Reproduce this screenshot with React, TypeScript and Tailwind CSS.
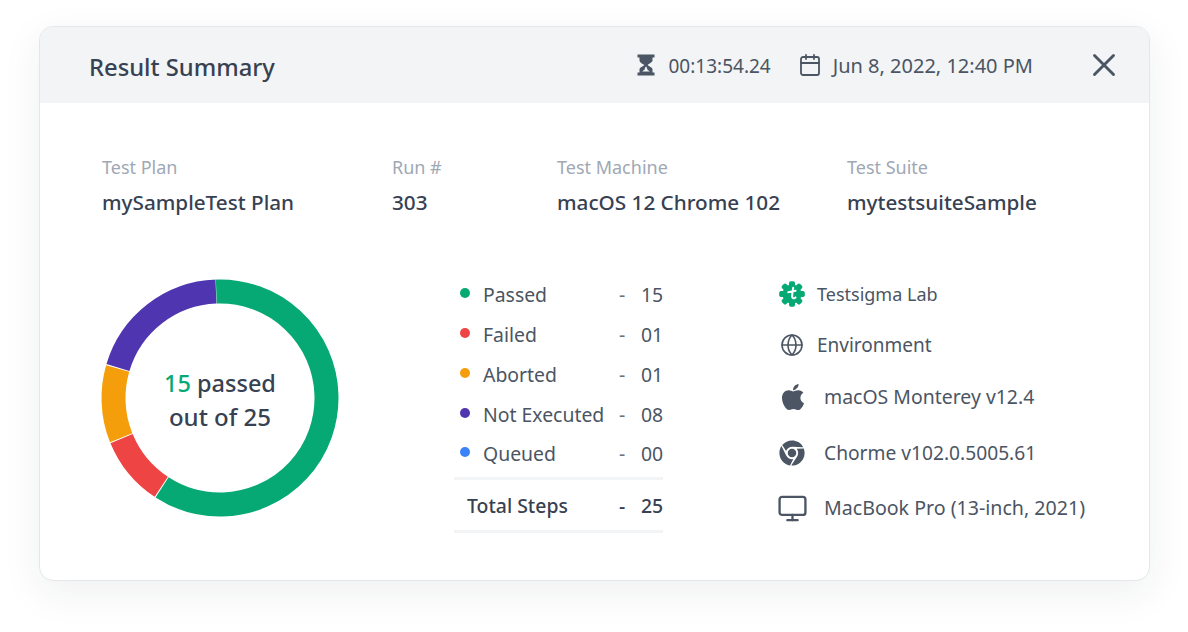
import { Calendar, Globe, Monitor, X } from "lucide-react";
import { FaApple, FaChrome } from "react-icons/fa";

const META = [
  { label: "Test Plan", value: "mySampleTest Plan", width: "w-[290px]" },
  { label: "Run #", value: "303", width: "w-[165px]" },
  { label: "Test Machine", value: "macOS 12 Chrome 102", width: "w-[290px]" },
  { label: "Test Suite", value: "mytestsuiteSample", width: "w-[240px]" },
];

const STATS = [
  { label: "Passed", value: "15", dot: "bg-[#06a973]" },
  { label: "Failed", value: "01", dot: "bg-[#ef4444]" },
  { label: "Aborted", value: "01", dot: "bg-[#f59e0b]" },
  { label: "Not Executed", value: "08", dot: "bg-[#4f35b0]" },
  { label: "Queued", value: "00", dot: "bg-[#3b82f6]" },
];

// pct is the share of the ring, in drawing order from the start angle
const SEGMENTS = [
  { pct: 59.8, color: "#06a973" },
  { pct: 9.6, color: "#ef4444" },
  { pct: 10.7, color: "#f59e0b" },
  { pct: 19.9, color: "#4f35b0" },
];

function Donut() {
  const r = 106.5;
  const c = 2 * Math.PI * r;
  let offset = 0;
  return (
    <div className="relative h-[238px] w-[238px] shrink-0 -translate-x-px translate-y-[2px]">
      <svg viewBox="0 0 238 238" className="h-full w-full rotate-[-92deg]">
        {SEGMENTS.map((s) => {
          const len = (s.pct / 100) * c;
          const el = (
            <circle
              key={s.color}
              cx="119"
              cy="119"
              r={r}
              fill="none"
              stroke={s.color}
              strokeWidth="24"
              strokeDasharray={`${len - 1} ${c - len + 1}`}
              strokeDashoffset={-offset}
            />
          );
          offset += len;
          return el;
        })}
      </svg>
      <div className="absolute inset-0 flex flex-col items-center justify-center pt-[3px] text-[23.5px] leading-[34px] font-medium text-[#374151]">
        <div>
          <span className="text-[#06a973]">15</span> passed
        </div>
        <div className="text-[24px]">out of 25</div>
      </div>
    </div>
  );
}

function Hourglass() {
  return (
    <svg viewBox="0 0 18 22" className="h-[22px] w-[18px]" fill="#4b5563">
      <rect x="0.5" y="0.5" width="17" height="3" />
      <rect x="0.5" y="18.5" width="17" height="3" />
      <path d="M2.5 3h13v3.6c0 1.8-3.6 3.2-4.9 4.4 1.3 1.2 4.9 2.6 4.9 4.4V19h-13v-3.6c0-1.8 3.6-3.2 4.9-4.4C5.1 9.8 2.5 8.4 2.5 6.6z" />
      <path d="M7.7 15.5c0-1.3.7-2.3 1.3-2.9.6.6 1.3 1.6 1.3 2.900l2.6 2.100H5.100z" fill="#f2f4f6" />
    </svg>
  );
}

function LabLogo() {
  return (
    <svg viewBox="0 0 26 26" className="h-[26px] w-[26px]">
      <g fill="#06a973">
        <circle cx="13" cy="13" r="9.5" />
        {[0, 45, 90, 135, 180, 225, 270, 315].map((a) => (
          <rect key={a} x="10" y="0.2" width="6" height="8" rx="1.8" transform={`rotate(${a} 13 13)`} />
        ))}
      </g>
      <path d="M14.2 6.8c-.4 3-1 6-1.1 8.4-.1 2.4 1.6 2.8 3.4 1.2M9.2 11.2l7.4-1.4" fill="none" stroke="#fff" strokeWidth="2" strokeLinecap="round" />
    </svg>
  );
}

export default function App() {
  return (
    <div className="h-[632px] w-[1188px] overflow-hidden bg-white pt-[26px] pl-[39px] font-['Noto_Sans',sans-serif] text-[#374151]">
      <div className="h-[555px] w-[1111px] overflow-hidden rounded-[14px] border border-[#e3e6ea] bg-white shadow-[0_12px_40px_rgba(31,41,55,0.07)]">
        {/* Header */}
        <div className="flex h-[76px] items-center bg-[#f2f4f6] pr-[26px] pl-[49px]">
          <h1 className="mt-[6px] flex-1 text-[23.75px] font-medium text-[#374151]">Result Summary</h1>
          <div className="flex items-center text-[#4b5563]">
            <Hourglass />
            <span className="mt-[2px] ml-[14px] text-[19px]">00:13:54.24</span>
            <Calendar className="ml-[27px] h-[24px] w-[24px]" strokeWidth={1.8} />
            <span className="mt-[2px] ml-[11px] text-[20px]">Jun 8, 2022, 12:40 PM</span>
            <X className="ml-[52px] h-[38px] w-[38px]" strokeWidth={1.8} />
          </div>
        </div>

        <div className="pt-[51px] pl-[62px]">
          {/* Meta row */}
          <div className="flex">
            {META.map((m) => (
              <div key={m.label} className={m.width}>
                <div className="text-[18px] leading-[26px] text-[#a0a8b4]">{m.label}</div>
                <div className="mt-[9px] text-[20.7px] leading-[26px] font-medium text-[#374151]">{m.value}</div>
              </div>
            ))}
          </div>

          <div className="mt-[62px] flex">
            <Donut />

            {/* Step counts */}
            <div className="-mt-[2px] ml-[114px] w-[209px] text-[19.4px] text-[#4b5563]">
              {STATS.map((s) => (
                <div key={s.label} className="flex h-[39.75px] items-center pl-[6px]">
                  <span className={`mb-[3px] h-[10px] w-[10px] rounded-full ${s.dot}`} />
                  <span className="ml-[13px] flex-1">{s.label}</span>
                  <span className="w-[22px] text-[#6b7280]">-</span>
                  <span className="w-[22px] text-right">{s.value}</span>
                </div>
              ))}
              <div className="mt-[3px] flex h-[56px] items-center border-y-[3px] border-[#f2f4f6] pt-[2px] pl-[13px] font-medium text-[#374151]">
                <span className="flex-1">Total Steps</span>
                <span className="w-[22px]">-</span>
                <span className="w-[22px] text-right">25</span>
              </div>
            </div>

            {/* Environment */}
            <div className="mt-px ml-[116px] text-[#4b5563]">
              <div className="flex h-[32px] items-center text-[18px]">
                <LabLogo />
                <span className="ml-[12px]">Testsigma Lab</span>
              </div>
              <div className="mt-[19px] flex h-[32px] items-center text-[19px]">
                <Globe className="ml-px h-[24px] w-[24px]" strokeWidth={1.6} />
                <span className="ml-[13px]">Environment</span>
              </div>
              <div className="mt-[20px] flex h-[32px] items-center text-[19.45px]">
                <FaApple className="-ml-[1px] h-[30px] w-[30px]" />
                <span className="ml-[16px]">macOS Monterey v12.4</span>
              </div>
              <div className="mt-[24px] flex h-[32px] items-center text-[19.2px]">
                <FaChrome className="h-[26px] w-[26px]" />
                <span className="ml-[19px]">Chorme v102.0.5005.61</span>
              </div>
              <div className="mt-[23px] flex h-[32px] items-center text-[19.6px]">
                <Monitor className="-ml-[2px] h-[31px] w-[31px]" strokeWidth={1.8} />
                <span className="ml-[16px]">MacBook Pro (13-inch, 2021)</span>
              </div>
            </div>
          </div>
        </div>
      </div>
    </div>
  );
}
